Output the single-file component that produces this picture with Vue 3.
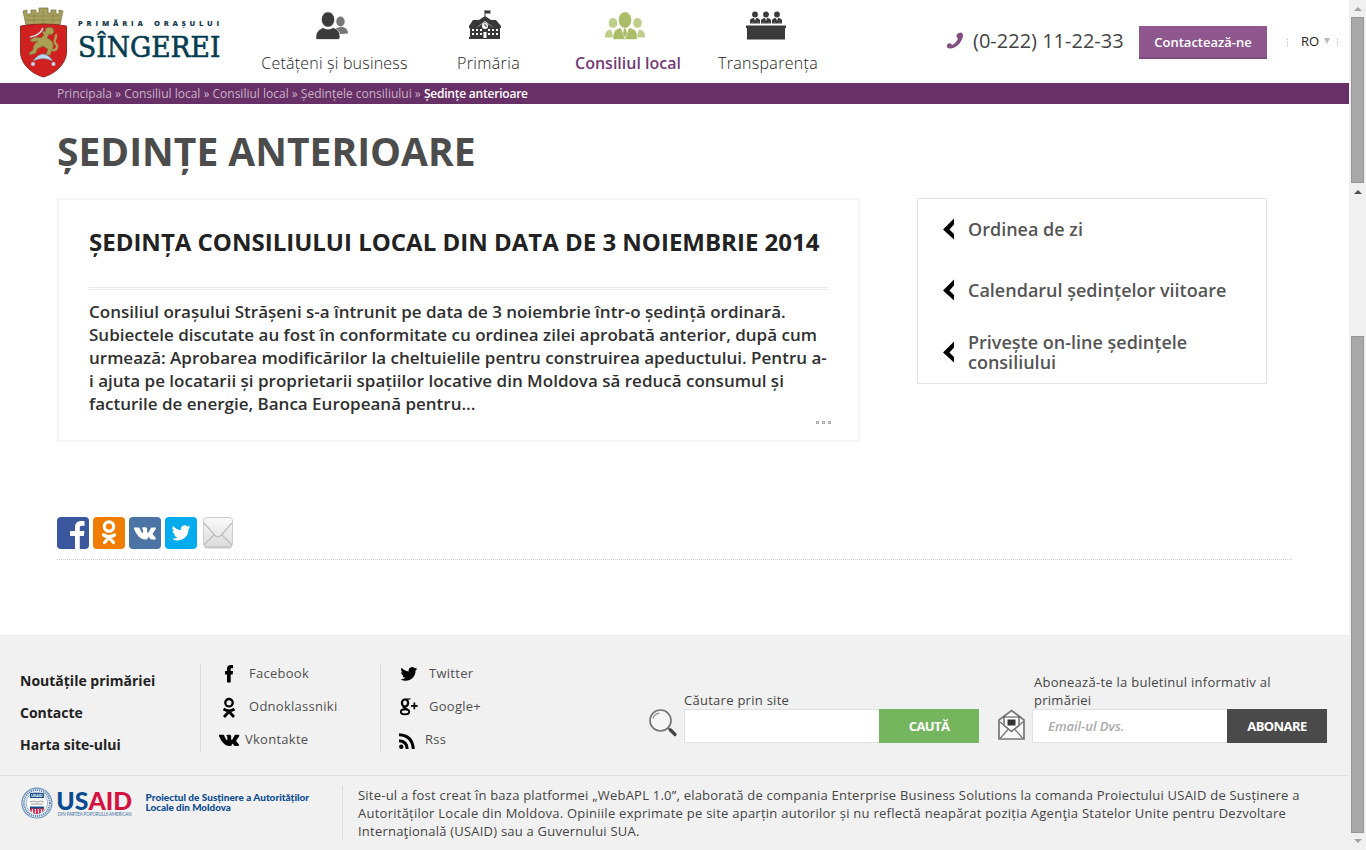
<script setup>
const nav = [
  { label: 'Cetățeni și business', icon: 'people', cls: 'n1' },
  { label: 'Primăria', icon: 'hall', cls: 'n2' },
  { label: 'Consiliul local', icon: 'council', cls: 'n3' },
  { label: 'Transparența', icon: 'panel', cls: 'n4' },
]
const crumbs = ['Principala', 'Consiliul local', 'Consiliul local', 'Ședințele consiliului']
const article = [
  'Consiliul orașului Strășeni s-a întrunit pe data de 3 noiembrie într-o ședință ordinară.',
  'Subiectele discutate au fost în conformitate cu ordinea zilei aprobată anterior, după cum',
  'urmează: Aprobarea modificărilor la cheltuielile pentru construirea apeductului. Pentru a-',
  'i ajuta pe locatarii și proprietarii spațiilor locative din Moldova să reducă consumul și',
  'facturile de energie, Banca Europeană pentru...',
]
const side = [['Ordinea de zi'], ['Calendarul ședințelor viitoare'], ['Privește on-line ședințele', 'consiliului']]
const bird = 'M24 4.6a9.9 9.9 0 0 1-2.8.8 5 5 0 0 0 2.1-2.7c-.9.5-2 1-3.1 1.2a4.9 4.9 0 0 0-8.4 4.5C7.700 8.200 4.100 6.200 1.700 3.200a4.900 4.900 0 0 0 1.500 6.600c-.8 0-1.600-.2-2.200-.6a4.900 4.900 0 0 0 3.900 4.900c-.7.2-1.500.2-2.200.1a4.900 4.900 0 0 0 4.600 3.400A9.900 9.900 0 0 1 0 19.500a14 14 0 0 0 7.500 2.200c9.100 0 14.300-7.700 14-14.600A10 10 0 0 0 24 4.600z'
const vk = 'M0 1h5c.8 0 1 .5 1.300 1.200C7.500 5 8.800 7.400 9.500 7.400c.6 0 .6-3.800.1-4.600C9.300 2.200 8.800 2 8.300 1.900 8.800 1 10 .8 11.800.8c2.500 0 2.700.7 2.700 2.500 0 1.600-.3 3.700.6 3.700.8 0 2-2.300 3.200-4.900.3-.8.6-1.100 1.300-1.100h3.600c1.200 0 1.200.7.6 1.900-.9 1.800-3.400 4.400-3.400 5.300 0 .8 3.500 3.300 3.600 4.900 0 .8-.5 1.100-1.400 1.100h-3.400c-1.300 0-2.400-2.700-3.300-2.700-1 0-.5 2.700-1.600 2.700h-2C7 14.200 3.400 9.800.2 3 0 2.300-.3 1 0 1z'
</script>

<template>
  <div class="screen">
    <div class="page">
      <header class="header">
        <svg class="logo" width="203" height="72" viewBox="0 0 203 72">
          <path d="M6 17 3 3l4-1v4h4V2h5v3h3V0h9v5h3V2h5v4h3V2l4 1-3 14z" fill="#a8a05f" stroke="#77713c" stroke-width=".7" />
          <path d="M7 8h33M6 12h34M14 5v12M23 3v14M33 5v12" stroke="#898346" stroke-width=".7" />
          <path d="M.5 18q23-4 46 0v26c0 12-12 22-23 25C12 66 .5 56 .5 44z" fill="#d0201f" stroke="#942b20" />
          <path d="M27 20c4-2 7 1 7 4l-3 3-2-1-2 4c5 2 8 6 5 12l-2 5h-4l2-6-5-3-6 3-1 4-6 2-1-2 4-3c0-4 2-7 5-9l-6 1-2-2 5-3 6 1 3-3-2-4 3 1 1-4z" fill="#aaa054" stroke="#7d7539" stroke-width=".7" />
          <path d="M32 42c5 1 7-4 3-7-2-3 2-4 1-9" fill="none" stroke="#aaa054" stroke-width="2.400" />
          <path d="M10 29c7-1 11-4 13-9" fill="none" stroke="#cbd6df" stroke-width="1.700" />
          <path d="M13 53q10-14 20 0-10-5-20 0z" fill="#b9d9ee" stroke="#688da5" stroke-width=".5" />
          <circle cx="13" cy="56" r="2" fill="#b9d9ee" /><circle cx="33.500" cy="56" r="2" fill="#b9d9ee" />
          <text x="58" y="18" class="logo-small" textLength="65">PRIMĂRIA</text>
          <text x="134" y="18" class="logo-small" textLength="65">ORAȘULUI</text>
          <text x="58" y="49" class="logo-big" textLength="142.500" lengthAdjust="spacingAndGlyphs">SÎNGEREI</text>
        </svg>
        <nav class="nav">
          <a v-for="n in nav" :key="n.label" class="nav-item" :class="n.cls">
            <svg v-if="n.icon === 'people'" width="34" height="30" viewBox="0 0 34 30">
              <g fill="#777"><ellipse cx="25.500" cy="11" rx="4.200" ry="5" /><path d="M20 24v-6c3-1 7-2 9-1s4 2 4 6z" /></g>
              <g fill="#3b3b3b" stroke="#fff" stroke-width=".7"><ellipse cx="13" cy="9" rx="6.700" ry="7.700" /><path d="M1 29c-.5-6 1-9 7-12 3 2 7 2 10 0 6 2 7 6 7 10q0 2-2 2z" /></g>
            </svg>
            <svg v-else-if="n.icon === 'hall'" width="34" height="31" viewBox="0 0 34 31">
              <path d="M16.500 1h1v9h-1zM17 1.500h6l-1 1.500 1 1.500h-6zM1 17l4-6h6l6-4 6 4h5l5 6v2h-7l-9-7-9 7H1zM2 19h6v9h18v-9h6v11H1v-2h1zM8 19l9-6 9 6v11H8z" fill="#383838" />
              <circle cx="17" cy="17" r="3" fill="#fff" /><path d="M17 15v2h2" stroke="#383838" fill="none" />
              <path d="M4 20h2v2H4zM8 20h2v2H8zM4 24h2v2H4zM8 24h2v2H8zM12 20h2v2h-2zM12 24h2v2h-2zM20 20h2v2h-2zM20 24h2v2h-2zM24 20h2v2h-2zM24 24h2v2h-2zM28 20h2v2h-2zM28 24h2v2h-2zM15.500 23h3v6h-3z" fill="#fff" />
            </svg>
            <svg v-else-if="n.icon === 'council'" width="42" height="30" viewBox="0 0 42 30">
              <g fill="#bfcf8b"><ellipse cx="9" cy="12.500" rx="4.300" ry="5" /><ellipse cx="33.500" cy="12.500" rx="4.300" ry="5" /><path d="M1 27c0-5 1-7 6-8l2 6 2-6 5 2v6zM26 20l5-1 2 6 2-6c5 1 6 3 6 8H26z" /></g>
              <g fill="#abbc68" stroke="#fff" stroke-width=".6"><ellipse cx="21" cy="9.500" rx="6.600" ry="8.300" /><path d="M9 29c0-8 2-10 8-12l4 11 4-11c7 2 9 4 8 12z" /></g>
              <path d="m20 18 2 0 1 5-2 4-2-4z" fill="#abbc68" />
            </svg>
            <svg v-else width="42" height="30" viewBox="0 0 42 30" fill="#3a3a3a">
              <path d="M1 15h40v2.500h-1V29H2V17.500H1z" />
              <g v-for="x in [10, 21, 32]" :key="x"><circle :cx="x" cy="4" r="2.900" /><path :d="`M${x - 5} 13v-3q0-2 4-2.500l1 3 1-3q4 .5 4 2.500v3z`" /><path :d="`M${x - 3.500} 12h2M${x + 1.500} 12h2`" stroke="#999" stroke-width=".5" /></g>
            </svg>
            <span>{{ n.label }}</span>
          </a>
        </nav>
        <div class="phone">
          <svg width="18" height="18" viewBox="0 0 18 18"><path d="M12 1.500 14.500.5q3 1 2.500 3.500C16 10 11 15.500 5 16.500q-3.500.5-4.200-2l.4-2q2-2 4-.7l.8 1.200q4-1.800 6-6.500l-1.300-1.200q-.8-2 .8-3.800z" fill="#814e80" /></svg>
          <span>(0-222) 11-22-33</span>
        </div>
        <a class="contact">Contactează-ne</a>
        <div class="lang"><i class="dots"></i><span>RO</span><b class="tri"></b><i class="dots"></i></div>
      </header>
      <div class="crumbs">
        <span v-for="(c, i) in crumbs" :key="i">{{ c }} » </span><strong>Ședințe anterioare</strong>
      </div>
      <main class="main">
        <h1>ȘEDINȚE ANTERIOARE</h1>
        <div class="columns">
          <article class="card">
            <h2>ȘEDINȚA CONSILIULUI LOCAL DIN DATA DE 3 NOIEMBRIE 2014</h2>
            <p><span v-for="l in article" :key="l">{{ l }}</span></p>
            <div class="more"><i></i><i></i><i></i></div>
          </article>
          <aside class="side">
            <a v-for="s in side" :key="s[0]">
              <svg width="12" height="22" viewBox="0 0 12 22"><path d="M11 .5v6L6.500 11.500l4.500 4.500v5.500L0 11.500z" /></svg>
              <span><em v-for="t in s" :key="t">{{ t }}</em></span>
            </a>
          </aside>
        </div>
        <div class="share">
          <svg width="32" height="32" viewBox="0 0 32 32"><rect width="32" height="32" rx="4" fill="#3b579d" /><path d="M18 32V19h-5v-5h5v-3.500c0-4.500 2.500-6.500 6.500-6.500h3v4.700h-2.300c-1.900 0-2.400.8-2.400 2.300v3h4.700l-.7 5h-4v13z" fill="#fff" /></svg>
          <svg width="32" height="32" viewBox="0 0 32 32"><rect width="32" height="32" rx="4" fill="#f07c00" /><circle cx="16" cy="9.500" r="4.700" fill="none" stroke="#fff" stroke-width="3.200" /><path d="M10.500 18q5.500 3.500 11 0M16 20.500l-4.500 5M16 20.500l4.500 5" fill="none" stroke="#fff" stroke-width="3.300" stroke-linecap="round" /></svg>
          <svg width="32" height="32" viewBox="0 0 32 32"><rect width="32" height="32" rx="4" fill="#4b73a4" /><g transform="translate(5 9.500) scale(.91)"><path :d="vk" fill="#fff" /></g></svg>
          <svg width="32" height="32" viewBox="0 0 32 32"><rect width="32" height="32" rx="4" fill="#00aced" /><g transform="translate(6.800 6.500) scale(.78)"><path :d="bird" fill="#fff" /></g></svg>
          <svg width="34" height="32" viewBox="0 0 34 32"><defs><linearGradient id="mailg" x2="0" y2="1"><stop stop-color="#fafafa" /><stop offset="1" stop-color="#dcdcdc" /></linearGradient></defs><rect x="3" y="2" width="28" height="29.500" rx="3" fill="#c9c9c9" /><rect x="2.500" y=".5" width="29" height="29" rx="3" fill="url(#mailg)" stroke="#ccc" /><path d="m3 6 11.500 13q2.500 1.800 5 0L31 6M3 28l10-10M31 28 21 18" fill="none" stroke="#bbb" stroke-width="1.200" /></svg>
        </div>
      </main>
      <footer class="footer">
        <div class="foot-top">
          <div class="links"><a>Noutățile primăriei</a><a>Contacte</a><a>Harta site-ului</a></div>
          <div class="social">
            <a><svg width="24" height="24" viewBox="0 0 24 24"><path d="M8 18.500v-8H6V7h2V4.800C8 2 9.700 1 12 1h2v3.300h-1.300c-.8 0-1 .3-1 1V7H14l-.3 3.500h-2v8z" /></svg><span>Facebook</span></a>
            <a><svg width="24" height="24" viewBox="0 0 24 24"><circle cx="10" cy="5.700" r="3.700" fill="none" stroke="#000" stroke-width="2.300" /><path d="M4.500 12q5.500 3.500 11 0M10 14.500 5 20M10 14.500l5 5.500" fill="none" stroke="#000" stroke-width="2.700" /></svg><span>Odnoklassniki</span></a>
            <a class="near"><svg width="24" height="24" viewBox="0 0 24 24"><g transform="translate(0 4) scale(.84)"><path :d="vk" /></g></svg><span>Vkontakte</span></a>
          </div>
          <div class="social second">
            <a><svg width="24" height="24" viewBox="0 0 24 24"><g transform="translate(1.500 1.500) scale(.7)"><path :d="bird" /></g></svg><span>Twitter</span></a>
            <a><svg width="24" height="24" viewBox="0 0 24 24"><ellipse cx="6" cy="6" rx="3.100" ry="3.500" fill="none" stroke="#000" stroke-width="2.200" /><ellipse cx="6" cy="14.800" rx="4.200" ry="2.600" fill="none" stroke="#000" stroke-width="1.900" /><path d="M6 1.500h6l-1.500 1.300H8zM5 9l4 3-2 1-4-3zM12 8h2.500V5.500h1.700V8h2.500v1.700h-2.500v2.500h-1.700V9.700H12z" /></svg><span>Google+</span></a>
            <a class="near rss"><svg width="24" height="24" viewBox="0 0 24 24"><circle cx="2.300" cy="16.800" r="2.200" /><path d="M0 10.700q8 .5 8.200 8.300M0 4.700q13.500.8 14.300 14.300" fill="none" stroke="#000" stroke-width="3" /></svg><span>Rss</span></a>
          </div>
          <div class="form search">
            <svg width="32" height="32" viewBox="0 0 32 32"><circle cx="12.500" cy="12.500" r="10.500" fill="#f6f6f6" stroke="#777" stroke-width="1.700" /><path d="M5 10.500q1-4.500 6.500-5.500" stroke="#888" fill="none" stroke-width="1.200" /><path d="m20 20 3 3" stroke="#666" stroke-width="2" /><path d="m22.500 22 4.500 4.500" stroke="#444" stroke-width="3.200" stroke-linecap="round" /></svg>
            <div><label>Căutare prin site</label><div class="row"><span class="field"></span><button class="green">CAUTĂ</button></div></div>
          </div>
          <div class="form subscribe">
            <svg width="27" height="32" viewBox="0 0 27 32"><path d="M1 11 13.500 1.500 26 11V30H1z" fill="#f8f8f8" stroke="#777" stroke-width="1.700" /><path d="M6 16.500V8h15v8.500l-7.500 6z" fill="#fff" stroke="#4a4a4a" stroke-width="1.200" /><path d="M9.500 10.500h8v6h-8z" fill="#333" /><path d="m1.500 12.500 12 10 12-10M2 29.500l8-9M25 29.500l-8-9" fill="none" stroke="#777" stroke-width="1.300" /></svg>
            <div><label>Abonează-te la buletinul informativ al<br>primăriei</label><div class="row"><span class="field">Email-ul Dvs.</span><button class="dark">ABONARE</button></div></div>
          </div>
        </div>
        <div class="foot-bottom">
          <svg class="usaid" width="343" height="54" viewBox="0 0 343 54">
            <circle cx="37" cy="17" r="15" fill="#f7f8fa" stroke="#6e93b8" stroke-width="1.200" /><circle cx="37" cy="17" r="13" fill="none" stroke="#6089b5" stroke-width="2" stroke-dasharray="1.300 .8" /><circle cx="37" cy="17" r="10.800" fill="#fff" stroke="#80a0c0" stroke-width=".8" />
            <path d="M30 7h14v5H30z" fill="#164d8c" /><text x="31" y="11.300" class="seal" textLength="12" lengthAdjust="spacingAndGlyphs">USAID</text>
            <path d="M30 16q4-2 7 0 4-2 7 0M31 18h12" stroke="#999" fill="none" /><path d="M30 21h14v3q-2 3-7 4-5-1-7-4z" fill="#d9254b" /><path d="M32.500 23v4M35.500 23v4M38.500 23v4M41.500 23v4" stroke="#fff" /><path d="M30 20.500h14v2H30z" fill="#164d8c" />
            <text x="56.500" y="24" class="us" textLength="76" lengthAdjust="spacingAndGlyphs">US<tspan fill="#d3123f">AID</tspan></text>
            <text x="58" y="30.500" class="tiny" textLength="74" lengthAdjust="spacingAndGlyphs">DIN PARTEA POPORULUI AMERICAN</text>
            <text x="146" y="15" class="proj" textLength="164" lengthAdjust="spacingAndGlyphs">Proiectul de Susținere a Autorităților</text>
            <text x="146" y="24.500" class="proj" textLength="85.500" lengthAdjust="spacingAndGlyphs">Locale din Moldova</text>
          </svg>
          <p>
            <span class="d1">Site-ul a fost creat în baza platformei „WebAPL 1.0”, elaborată de compania Enterprise Business Solutions la comanda Proiectului USAID de Susținere a</span>
            <span class="d2">Autorităților Locale din Moldova. Opiniile exprimate pe site aparțin autorilor și nu reflectă neapărat poziția Agenţia Statelor Unite pentru Dezvoltare</span>
            <span class="d3">Internaţională (USAID) sau a Guvernului SUA.</span>
          </p>
        </div>
      </footer>
    </div>
    <div class="scrolls">
      <div class="track t1"><b class="up pale"></b><i></i></div>
      <div class="track t2"><b class="up"></b><i></i><b class="down"></b></div>
    </div>
  </div>
</template>

<style>
body { margin: 0; background: #fff; overflow: hidden; }
</style>
<style scoped>
* { box-sizing: border-box; }
.screen { display: flex; width: 1366px; height: 850px; overflow: hidden; font-family: "Open Sans", "Noto Sans", sans-serif; color: #444; white-space: nowrap; }
.screen svg { display: block; flex: none; }
.page { width: 1349px; height: 850px; display: flex; flex-direction: column; }
.header { height: 83px; flex: none; display: flex; align-items: flex-start; }
.logo { margin: 8px 0 0 20px; overflow: visible; }
.logo-small { font: 800 7.500px "Open Sans", sans-serif; fill: #173c50; }
.logo-big { font: 27.500px "DejaVu Serif", serif; fill: #063c50; stroke: #063c50; stroke-width: .6px; }
.nav { display: flex; margin-left: 38px; }
.nav-item { display: flex; flex-direction: column; align-items: center; font-size: 16px; font-weight: 300; line-height: 22px; color: #222; padding-top: 10px; letter-spacing: .2px; }
.nav-item svg { height: 31px; margin: 0 6px 11px 0; }
.n1 { width: 147px; } .n2 { width: 63px; margin-left: 49px; letter-spacing: .35px; } .n3 { width: 106px; margin-left: 55px; color: #743b75; font-weight: 600; letter-spacing: 0; } .n4 { width: 100px; margin-left: 37px; letter-spacing: .3px; }
.n2 svg { margin: -1px 7px 12px 0; } .n4 svg { margin-right: 4px; }
.phone { display: flex; margin: 26px 0 0 128px; width: 193px; font-size: 20px; line-height: 30px; }
.phone svg { margin: 6px 9px 0 0; }
.contact { width: 128px; height: 33px; margin-top: 26px; background: #8e588e; border-bottom: 2px solid #7c497d; color: #fff; font-weight: 600; font-size: 13px; line-height: 32px; text-align: center; }
.lang { display: flex; align-items: center; margin: 32px 0 0 20px; height: 18px; font-size: 13px; color: #222; }
.dots { width: 1px; height: 7px; border-left: 1px dotted #bbb; margin-top: 3px; }
.lang span { margin-left: 13px; }
.tri { border: 3.500px solid transparent; border-top: 6px solid #bbb; border-bottom: 0; margin: 0 7px 0 5px; }
.crumbs { height: 21px; flex: none; background: #673066; padding-left: 57px; color: #cbb3ca; font-size: 12px; line-height: 21px; white-space: pre; }
.crumbs strong { color: #fff; font-weight: 600; letter-spacing: -.22px; }
.main { height: 531px; flex: none; padding-left: 57px; }
h1 { margin: 0; height: 94px; padding-top: 19px; font-size: 39px; line-height: 56px; font-weight: 700; color: #4c4c4c; }
.columns { display: flex; gap: 57px; align-items: flex-start; }
.card { width: 803px; height: 244px; border: 2px solid #f6f6f6; padding: 25px 30px 0; }
h2 { margin: 0; width: 739px; height: 65px; border-bottom: 3px double #e9e9e9; font-size: 24px; line-height: 34px; color: #222; font-weight: 700; }
.card p { margin: 10px 0 0; font-size: 17px; line-height: 23px; font-weight: 600; color: #303030; }
.card p span { display: block; }
.more { display: flex; justify-content: flex-end; gap: 3px; margin: 6px -3px 0 0; }
.more i { width: 3px; height: 3px; border: 1px solid #aaa; }
.side { width: 350px; height: 186px; border: 1px solid #e2e2e2; display: grid; grid-template-rows: 60px 61px 63px; padding-left: 25px; }
.side a { display: flex; align-items: center; gap: 13px; font-size: 18px; line-height: 20px; font-weight: 600; color: #555; }
.side em { display: block; font-style: normal; }
.share { width: 1235px; margin-top: 75px; height: 43px; display: flex; gap: 4px; border-bottom: 1px dotted #ccc; }
.footer { height: 215px; flex: none; background: #f1f1f1; border-top: 1px solid #ededed; }
.foot-top { height: 140px; display: flex; border-bottom: 1px solid #e0e0e0; }
.links { width: 201px; height: 88px; margin-top: 28px; padding: 1px 0 0 20px; border-right: 1px solid #ddd; display: flex; flex-direction: column; font-size: 14px; font-weight: 700; color: #222; line-height: 32px; }
.social { width: 180px; height: 88px; margin-top: 28px; padding-left: 18px; border-right: 1px solid #ddd; }
.second { border: 0; }
.social a { display: flex; height: 33px; font-size: 13px; line-height: 19px; color: #505050; gap: 6px; letter-spacing: .27px; }
.social a.near { gap: 2px; }
.form { display: flex; align-items: flex-end; height: 107px; }
.search { margin-left: 87px; width: 350px; }
.form > svg { margin: 0 4px 3px 0; }
.form label { display: block; font-size: 13px; line-height: 18px; color: #444; letter-spacing: .27px; }
.row { display: flex; height: 34px; }
.field { width: 195px; border: 1px solid #e0e0e0; border-right: 0; background: #fff; padding-left: 15px; font: italic 600 13px/32px "Open Sans", sans-serif; color: #aaa; }
button { width: 100px; border: 0; padding: 0; font: 700 13px/34px "Open Sans", sans-serif; letter-spacing: -.6px; color: #fff; }
.green { background: #74b55e; } .dark { background: #4a4a4a; }
.subscribe > svg { margin: 0 7px 2px 0; } .subscribe label { padding-left: 2px; }
.foot-bottom { display: flex; padding-top: 10px; }
.usaid { border-right: 1px solid #ddd; }
.seal { font: bold 4.500px Lato, sans-serif; fill: #fff; } .us { font: 900 24px Lato, sans-serif; fill: #0b4c91; } .tiny { font: 5.500px Lato, sans-serif; fill: #3b6ca3; } .proj { font: 900 9.500px Lato, sans-serif; fill: #0b4c91; }
.foot-bottom p { margin: 0 0 0 15px; font-size: 13px; line-height: 18px; letter-spacing: .222px; }
.foot-bottom p span { display: block; }
.d2 { letter-spacing: .25px; }
.scrolls { width: 17px; background: #f0f0f0; }
.track { display: flex; flex-direction: column; align-items: center; }
.track i { width: 13px; background: #a9a9a9; border: 1px solid #969696; }
.t1 i { height: 166px; margin-top: 6px; }
.up { border: 4px solid transparent; border-top: 0; border-bottom: 4px solid #505050; margin-top: 7px; }
.up.pale { border-bottom-color: #a3a3a3; }
.t2 i { height: 497px; margin-top: 142px; }
.down { border: 4px solid transparent; border-bottom: 0; border-top: 4px solid #a3a3a3; margin-top: 6px; }
</style>
